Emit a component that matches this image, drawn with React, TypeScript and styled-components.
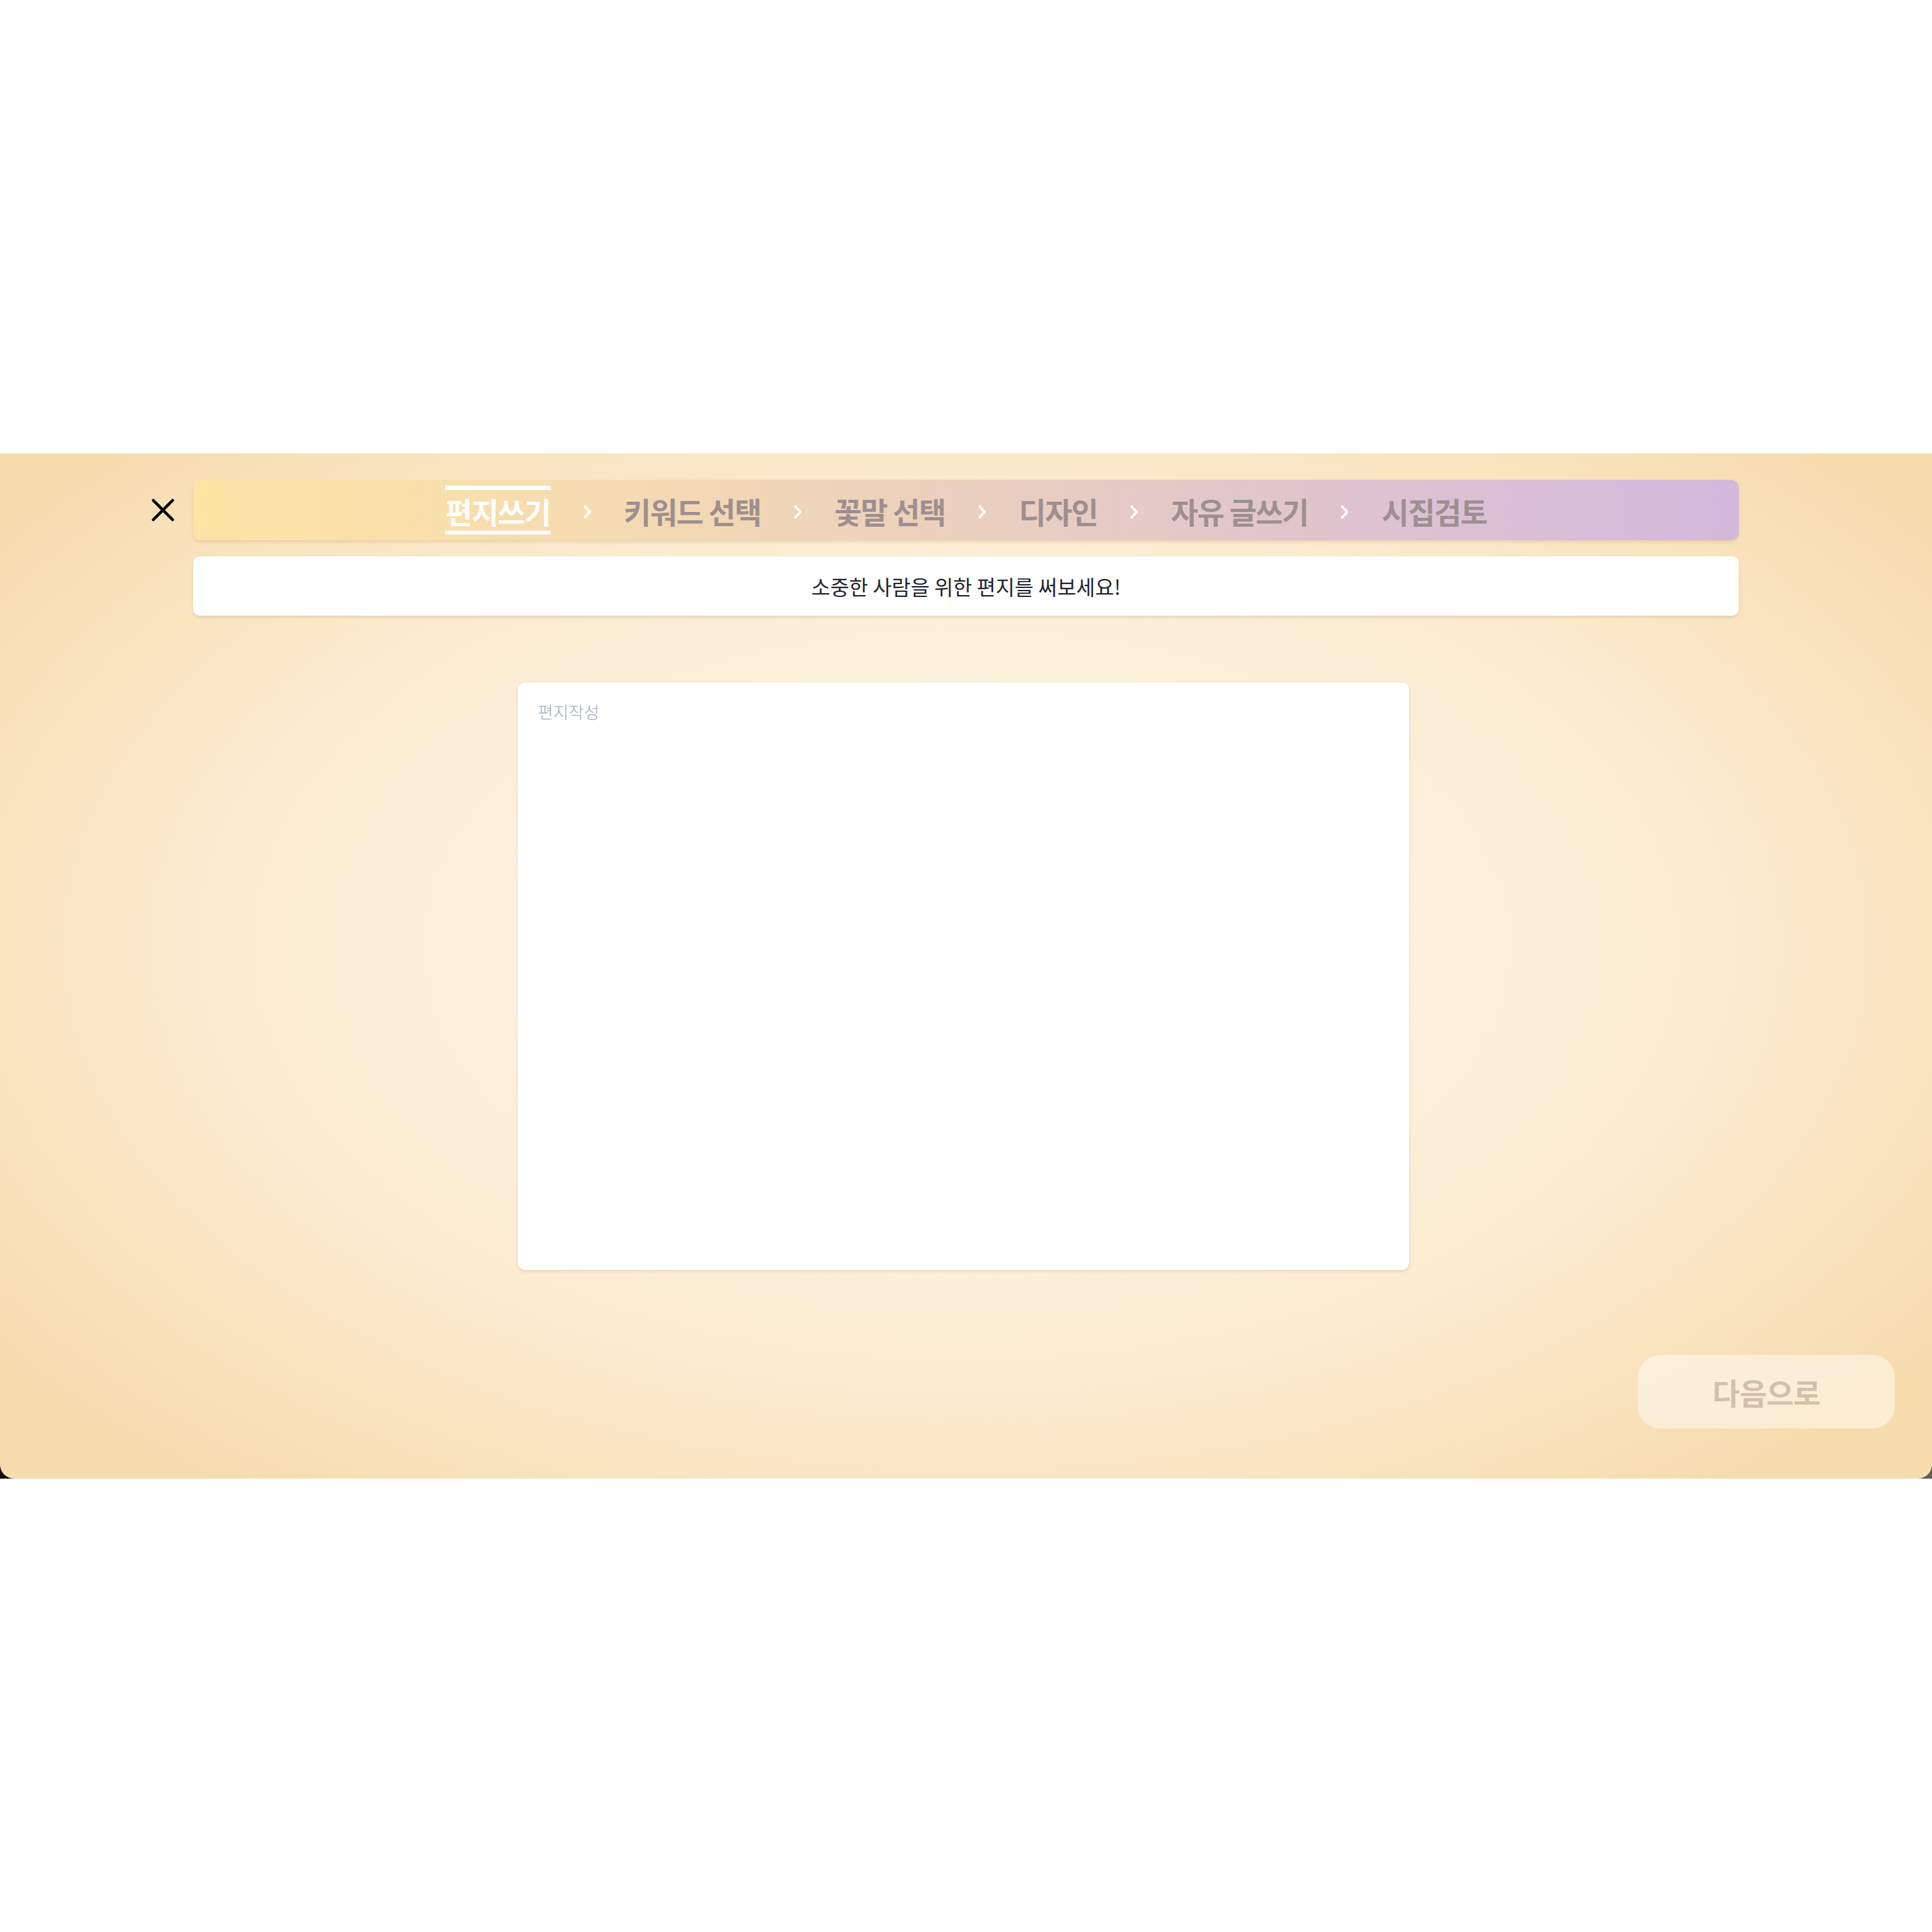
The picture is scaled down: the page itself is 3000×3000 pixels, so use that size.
import React from "react";
import styled, { createGlobalStyle } from "styled-components";

const GlobalStyle = createGlobalStyle`
  html, body {
    margin: 0;
    padding: 0;
    background: #ffffff;
    font-family: "Noto Sans CJK KR", "Noto Sans", sans-serif;
  }
  #root {
    min-height: 100vh;
    display: flex;
    align-items: center;
  }
  * { box-sizing: border-box; }
`;

const Frame = styled.div`
  width: 100%;
  background: linear-gradient(90deg, #1c0909 0%, #3a3030 50%, #5e5e5e 100%);
`;

const Panel = styled.main`
  width: 100%;
  height: 1592px;
  border-radius: 0 0 22px 22px;
  background: radial-gradient(
    ellipse 62% 68% at 50% 48%,
    #fdf7ec 0%,
    #fcf3e2 30%,
    #fbebd0 62%,
    #f8e1b9 88%,
    #f7dcae 100%
  );
  padding: 41px 0 78px;
  display: flex;
  flex-direction: column;
  align-items: center;
`;

const Header = styled.header`
  width: 100%;
  display: grid;
  grid-template-columns: 1fr 2400px 1fr;
  align-items: center;
`;

const CloseButton = styled.button`
  justify-self: end;
  margin-right: 29px;
  width: 36px;
  height: 36px;
  padding: 0;
  border: none;
  background: transparent;
  display: flex;
  align-items: center;
  justify-content: center;
  cursor: pointer;
`;

const StepBar = styled.nav`
  height: 94px;
  border-radius: 12px;
  background: linear-gradient(
    90deg,
    #fde4a4 0%,
    #f6dcb0 25%,
    #ecd2bb 45%,
    #e3c8c8 65%,
    #dbc0d4 82%,
    #d3b9dc 100%
  );
  box-shadow: 0 3px 4px rgba(190, 150, 110, 0.25);
  display: flex;
  align-items: center;
  justify-content: center;
  gap: 50px;
`;

const Step = styled.span<{ $active?: boolean }>`
  font-family: "Noto Sans CJK KR", "Noto Sans", sans-serif;
  font-size: 46px;
  font-weight: 700;
  letter-spacing: -1.5px;
  line-height: 58px;
  white-space: nowrap;
  color: ${(p) => (p.$active ? "#ffffff" : "#9e8f8f")};
  border-top: 7px solid ${(p) => (p.$active ? "#ffffff" : "transparent")};
  border-bottom: 6px solid ${(p) => (p.$active ? "#ffffff" : "transparent")};
  padding: 3px 0 2px;
`;

const Chevron = styled.svg`
  width: 14px;
  height: 22px;
  flex: none;
  margin-top: 6px;
`;

const Notice = styled.div`
  width: 2400px;
  height: 92px;
  margin-top: 25px;
  border-radius: 10px;
  background: #ffffff;
  box-shadow: 0 3px 4px rgba(170, 140, 110, 0.22);
  display: flex;
  align-items: center;
  justify-content: center;
  font-family: "Noto Sans CJK KR", "Noto Sans", sans-serif;
  font-size: 32px;
  font-weight: 400;
  letter-spacing: 0;
  color: #1f2430;
`;

const LetterArea = styled.textarea`
  width: 1384px;
  height: 912px;
  margin-top: 104px;
  margin-right: 8px;
  flex: none;
  border: none;
  outline: none;
  resize: none;
  border-radius: 12px;
  background: #ffffff;
  box-shadow: 0 2px 4px rgba(170, 140, 110, 0.25);
  padding: 26px 31px;
  font-family: "Noto Sans CJK KR", "Noto Sans", sans-serif;
  font-size: 26px;
  font-weight: 300;
  color: #333;
  &::placeholder {
    color: #9eacbf;
  }
`;

const Footer = styled.footer`
  width: 100%;
  margin-top: 132px;
  padding-right: 58px;
  display: flex;
  justify-content: flex-end;
`;

const NextButton = styled.button`
  width: 398px;
  height: 114px;
  border: none;
  border-radius: 34px;
  background: rgba(255, 255, 255, 0.45);
  color: #d3c0aa;
  font-family: "Noto Sans CJK KR", "Noto Sans", sans-serif;
  font-size: 46px;
  font-weight: 700;
  letter-spacing: -0.5px;
  cursor: default;
`;

const steps = ["편지쓰기", "키워드 선택", "꽃말 선택", "디자인", "자유 글쓰기", "시집검토"];

const ChevronIcon = () => (
  <Chevron viewBox="0 0 14 22">
    <polyline
      points="3,2.5 11,11 3,19.5"
      fill="none"
      stroke="#ffffff"
      strokeWidth="3.6"
      strokeLinecap="round"
      strokeLinejoin="round"
    />
  </Chevron>
);

export default function App() {
  return (
    <>
      <GlobalStyle />
      <Frame>
        <Panel>
          <Header>
            <CloseButton aria-label="닫기">
              <svg width="36" height="36" viewBox="0 0 36 36">
                <path
                  d="M3 3 L33 33 M33 3 L3 33"
                  stroke="#000"
                  strokeWidth="4.5"
                  strokeLinecap="round"
                />
              </svg>
            </CloseButton>
            <StepBar>
              {steps.map((s, i) => (
                <React.Fragment key={s}>
                  {i > 0 && <ChevronIcon />}
                  <Step $active={i === 0}>{s}</Step>
                </React.Fragment>
              ))}
            </StepBar>
          </Header>
          <Notice>소중한 사람을 위한 편지를 써보세요!</Notice>
          <LetterArea placeholder="편지작성" />
          <Footer>
            <NextButton>다음으로</NextButton>
          </Footer>
        </Panel>
      </Frame>
    </>
  );
}
